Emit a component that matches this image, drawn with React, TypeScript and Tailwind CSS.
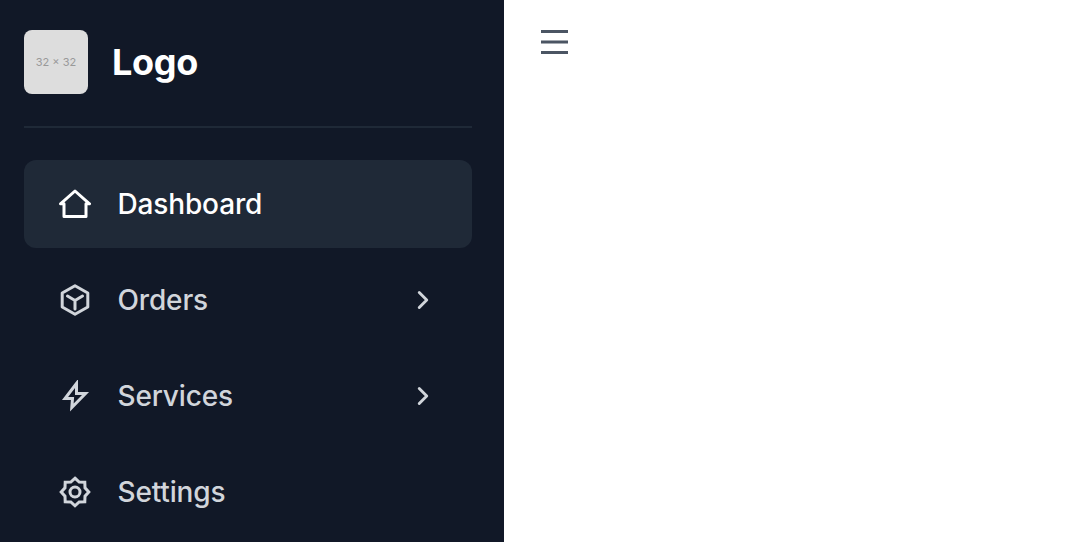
import React from 'react';
import { ChevronRight } from 'lucide-react';

const HomeIcon = ({ className }: { className?: string }) => (
  <svg className={className} viewBox="0 0 32 32" fill="none" stroke="currentColor" strokeWidth="3" strokeLinejoin="round" strokeLinecap="round">
    <path d="M1.5 15.8 16 3 30.5 15.8H27V28.6H5V15.8Z" />
  </svg>
);

const CubeIcon = ({ className }: { className?: string }) => (
  <svg className={className} viewBox="0 0 32 32" fill="none" stroke="currentColor" strokeWidth="3" strokeLinejoin="round" strokeLinecap="round">
    <path d="M16 1.8 28.8 9v14L16 30.2 3.2 23V9Z" />
    <path d="M8.5 12 16 16.5l7.5-4.5M16 16.5V25" />
  </svg>
);

const BoltIcon = ({ className }: { className?: string }) => (
  <svg className={className} viewBox="0 0 32 32" fill="none" stroke="currentColor" strokeWidth="3" strokeLinejoin="miter">
    <path d="M17.5 3.5 6 18.5H13.5L12.8 27.5 26.5 13.5H17.5Z" />
  </svg>
);

const GearIcon = ({ className }: { className?: string }) => (
  <svg className={className} viewBox="0 0 32 32" fill="none" stroke="currentColor" strokeWidth="3" strokeLinejoin="miter">
    <path d="M16 2.2 20.2 6 25.8 6.2 26 11.8 29.8 16 26 20.2 25.8 25.8 20.2 26 16 29.8 11.8 26 6.2 25.8 6 20.2 2.2 16 6 11.8 6.2 6.2 11.8 6Z" />
    <circle cx="16" cy="16" r="5" />
  </svg>
);

const navItems = [
  { label: 'Dashboard', icon: HomeIcon, active: true },
  { label: 'Orders', icon: CubeIcon, hasChildren: true },
  { label: 'Services', icon: BoltIcon, hasChildren: true },
  { label: 'Settings', icon: GearIcon },
];

export default function App() {
  return (
    <div className="flex h-[542px] overflow-hidden bg-white font-['Inter',sans-serif]">
      <aside className="w-[504px] shrink-0 bg-[#111827] py-6 pr-8 pl-6">
        <div className="flex h-[104px] items-start gap-6 border-b-2 border-[#1f2937] pt-1.5">
          <div className="flex h-16 w-16 items-center justify-center rounded-lg bg-[#dddddd] text-[11px] text-[#999999]">32 × 32</div>
          <span className="mt-[12px] text-[36px] leading-10 font-bold tracking-[-0.3px] text-white">Logo</span>
        </div>
        <nav className="mt-8 flex flex-col gap-2">
          {navItems.map(item => {
            const Icon = item.icon;
            return (
              <div
                key={item.label}
                className={`flex h-[88px] items-center rounded-xl pr-[34px] pl-[35px] ${item.active ? 'bg-[#1f2937] text-white' : 'text-[#d1d5db]'}`}
              >
                <Icon className="h-8 w-8 shrink-0" />
                <span className="ml-[26.5px] text-[28px] leading-9 font-[450] tracking-[-0.15px]">{item.label}</span>
                {item.hasChildren && <ChevronRight className="ml-auto h-[30px] w-[30px]" strokeWidth={2.3} />}
              </div>
            );
          })}
        </nav>
      </aside>
      <main className="flex-1 px-8 py-6">
        <svg className="h-9 w-9 text-[#4b5563]" viewBox="0 0 36 36" fill="none" stroke="currentColor" strokeWidth="3">
          <path d="M5 7.5H32M5 18H32M5 28.5H32" />
        </svg>
      </main>
    </div>
  );
}
